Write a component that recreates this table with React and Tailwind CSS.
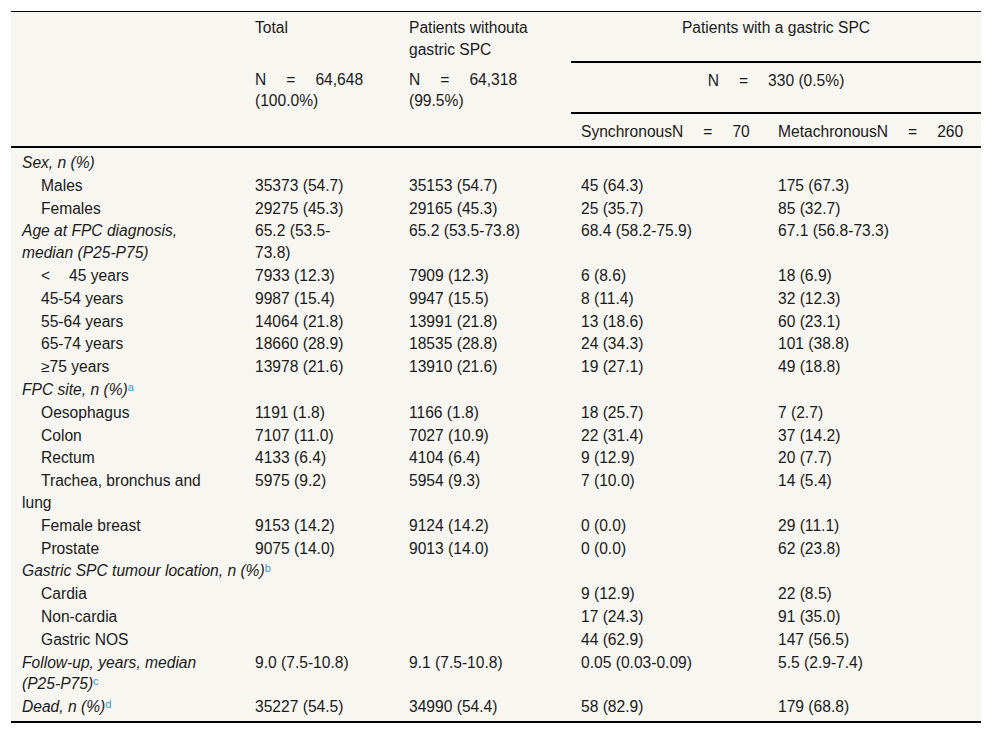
import React from "react";

const Sp = ({ w = "w-[20px]" }) => <span className={`inline-block ${w}`}></span>;
const Sup = ({ children }) => (
  <sup className="text-[11px] not-italic text-[#2f9be0] relative top-[-4px]">{children}</sup>
);

const rows = [
  { label: "Sex, n (%)", italic: true },
  { label: "Males", sub: true, v: ["35373 (54.7)", "35153 (54.7)", "45 (64.3)", "175 (67.3)"] },
  { label: "Females", sub: true, v: ["29275 (45.3)", "29165 (45.3)", "25 (35.7)", "85 (32.7)"] },
  {
    label: (
      <>
        Age at FPC diagnosis,
        <br />
        median (P25-P75)
      </>
    ),
    italic: true,
    v: [
      <>
        65.2 (53.5-
        <br />
        73.8)
      </>,
      "65.2 (53.5-73.8)",
      "68.4 (58.2-75.9)",
      "67.1 (56.8-73.3)",
    ],
  },
  {
    label: (
      <>
        &lt;
        <Sp w="w-[19px]" />
        45 years
      </>
    ),
    sub: true,
    v: ["7933 (12.3)", "7909 (12.3)", "6 (8.6)", "18 (6.9)"],
  },
  { label: "45-54 years", sub: true, v: ["9987 (15.4)", "9947 (15.5)", "8 (11.4)", "32 (12.3)"] },
  { label: "55-64 years", sub: true, v: ["14064 (21.8)", "13991 (21.8)", "13 (18.6)", "60 (23.1)"] },
  { label: "65-74 years", sub: true, v: ["18660 (28.9)", "18535 (28.8)", "24 (34.3)", "101 (38.8)"] },
  { label: "≥75 years", sub: true, v: ["13978 (21.6)", "13910 (21.6)", "19 (27.1)", "49 (18.8)"] },
  {
    label: (
      <>
        FPC site, n (%)<Sup>a</Sup>
      </>
    ),
    italic: true,
  },
  { label: "Oesophagus", sub: true, v: ["1191 (1.8)", "1166 (1.8)", "18 (25.7)", "7 (2.7)"] },
  { label: "Colon", sub: true, v: ["7107 (11.0)", "7027 (10.9)", "22 (31.4)", "37 (14.2)"] },
  { label: "Rectum", sub: true, v: ["4133 (6.4)", "4104 (6.4)", "9 (12.9)", "20 (7.7)"] },
  {
    label: (
      <>
        Trachea, bronchus and
        <br />
        lung
      </>
    ),
    sub: true,
    v: ["5975 (9.2)", "5954 (9.3)", "7 (10.0)", "14 (5.4)"],
  },
  { label: "Female breast", sub: true, v: ["9153 (14.2)", "9124 (14.2)", "0 (0.0)", "29 (11.1)"] },
  { label: "Prostate", sub: true, v: ["9075 (14.0)", "9013 (14.0)", "0 (0.0)", "62 (23.8)"] },
  {
    label: (
      <>
        Gastric SPC tumour location, n (%)<Sup>b</Sup>
      </>
    ),
    italic: true,
    span: true,
  },
  { label: "Cardia", sub: true, v: ["", "", "9 (12.9)", "22 (8.5)"] },
  { label: "Non-cardia", sub: true, v: ["", "", "17 (24.3)", "91 (35.0)"] },
  { label: "Gastric NOS", sub: true, v: ["", "", "44 (62.9)", "147 (56.5)"] },
  {
    label: (
      <>
        Follow-up, years, median
        <br />
        (P25-P75)<Sup>c</Sup>
      </>
    ),
    italic: true,
    v: ["9.0 (7.5-10.8)", "9.1 (7.5-10.8)", "0.05 (0.03-0.09)", "5.5 (2.9-7.4)"],
  },
  {
    label: (
      <>
        Dead, n (%)<Sup>d</Sup>
      </>
    ),
    italic: true,
    v: ["35227 (54.5)", "34990 (54.4)", "58 (82.9)", "179 (68.8)"],
    last: true,
  },
];

export default function App() {
  return (
    <div
      className="bg-white min-h-[735px] w-[992px] pt-[11px] pl-[11px] text-[#1a1a1a]"
      style={{ fontFamily: '"Liberation Sans", Arial, sans-serif' }}
    >
      <table className="table-fixed border-collapse bg-[#f8f6f0] w-[970px] text-[15.6px] leading-[21.8px] border-t border-black">
        <colgroup>
          <col className="w-[234px]" />
          <col className="w-[154px]" />
          <col className="w-[172px]" />
          <col className="w-[197px]" />
          <col className="w-[213px]" />
        </colgroup>
        <thead>
          <tr>
            <th className="pl-[11px] pt-[5px] pb-[1px] font-normal text-left align-top"></th>
            <th className="pl-[10px] pt-[5px] pb-[1px] font-normal text-left align-top whitespace-nowrap">Total</th>
            <th className="pl-[10px] pt-[5px] pb-[1px] font-normal text-left align-top whitespace-nowrap">
              Patients withouta
              <br />
              gastric SPC
            </th>
            <th
              colSpan={2}
              className="px-[10px] pt-[5px] pb-[1px] font-normal text-center align-top whitespace-nowrap border-b-2 border-black"
            >
              Patients with a gastric SPC
            </th>
          </tr>
          <tr>
            <th className="pl-[11px] pt-[7px] pb-[1px] font-normal text-left align-top"></th>
            <th className="pl-[10px] pt-[7px] pb-[1px] font-normal text-left align-top whitespace-nowrap">
              N<Sp />=<Sp />64,648
              <br />
              (100.0%)
            </th>
            <th className="pl-[10px] pt-[7px] pb-[1px] font-normal text-left align-top whitespace-nowrap">
              N<Sp />=<Sp />64,318
              <br />
              (99.5%)
            </th>
            <th
              colSpan={2}
              className="px-[10px] pt-[7px] pb-[1px] font-normal text-center align-top whitespace-nowrap border-b-2 border-black"
            >
              N<Sp />=<Sp />330 (0.5%)
            </th>
          </tr>
          <tr>
            <th className="pl-[11px] pt-[7px] pb-[3px] font-normal text-left align-top border-b-2 border-black"></th>
            <th className="pl-[10px] pt-[7px] pb-[3px] font-normal text-left align-top border-b-2 border-black"></th>
            <th className="pl-[10px] pt-[7px] pb-[3px] font-normal text-left align-top border-b-2 border-black"></th>
            <th className="pl-[10px] pt-[7px] pb-[3px] font-normal text-left align-top whitespace-nowrap border-b-2 border-black">
              SynchronousN<Sp />=<Sp />70
            </th>
            <th className="pl-[10px] pt-[7px] pb-[3px] font-normal text-left align-top whitespace-nowrap border-b-2 border-black">
              MetachronousN<Sp />=<Sp />260
            </th>
          </tr>
        </thead>
        <tbody>
          {rows.map((r, i) => {
            const pad = `${i === 0 ? "pt-[4px]" : "pt-[1px]"} ${r.last ? "pb-[3px] border-b-2 border-black" : "pb-0"}`;
            if (r.span || !r.v) {
              return (
                <tr key={i}>
                  <td
                    colSpan={r.span ? 5 : 1}
                    className={`pl-[11px] ${pad} align-top whitespace-nowrap ${r.italic ? "italic" : ""}`}
                  >
                    {r.label}
                  </td>
                  {!r.span && (
                    <>
                      <td className={pad}></td>
                      <td className={pad}></td>
                      <td className={pad}></td>
                      <td className={pad}></td>
                    </>
                  )}
                </tr>
              );
            }
            return (
              <tr key={i}>
                <td
                  className={`pl-[11px] ${pad} align-top whitespace-nowrap ${r.italic ? "italic" : ""} ${
                    r.sub ? "indent-[19px]" : ""
                  }`}
                >
                  {r.label}
                </td>
                {r.v.map((c, j) => (
                  <td key={j} className={`pl-[10px] ${pad} align-top whitespace-nowrap`}>
                    {c}
                  </td>
                ))}
              </tr>
            );
          })}
        </tbody>
      </table>
    </div>
  );
}
